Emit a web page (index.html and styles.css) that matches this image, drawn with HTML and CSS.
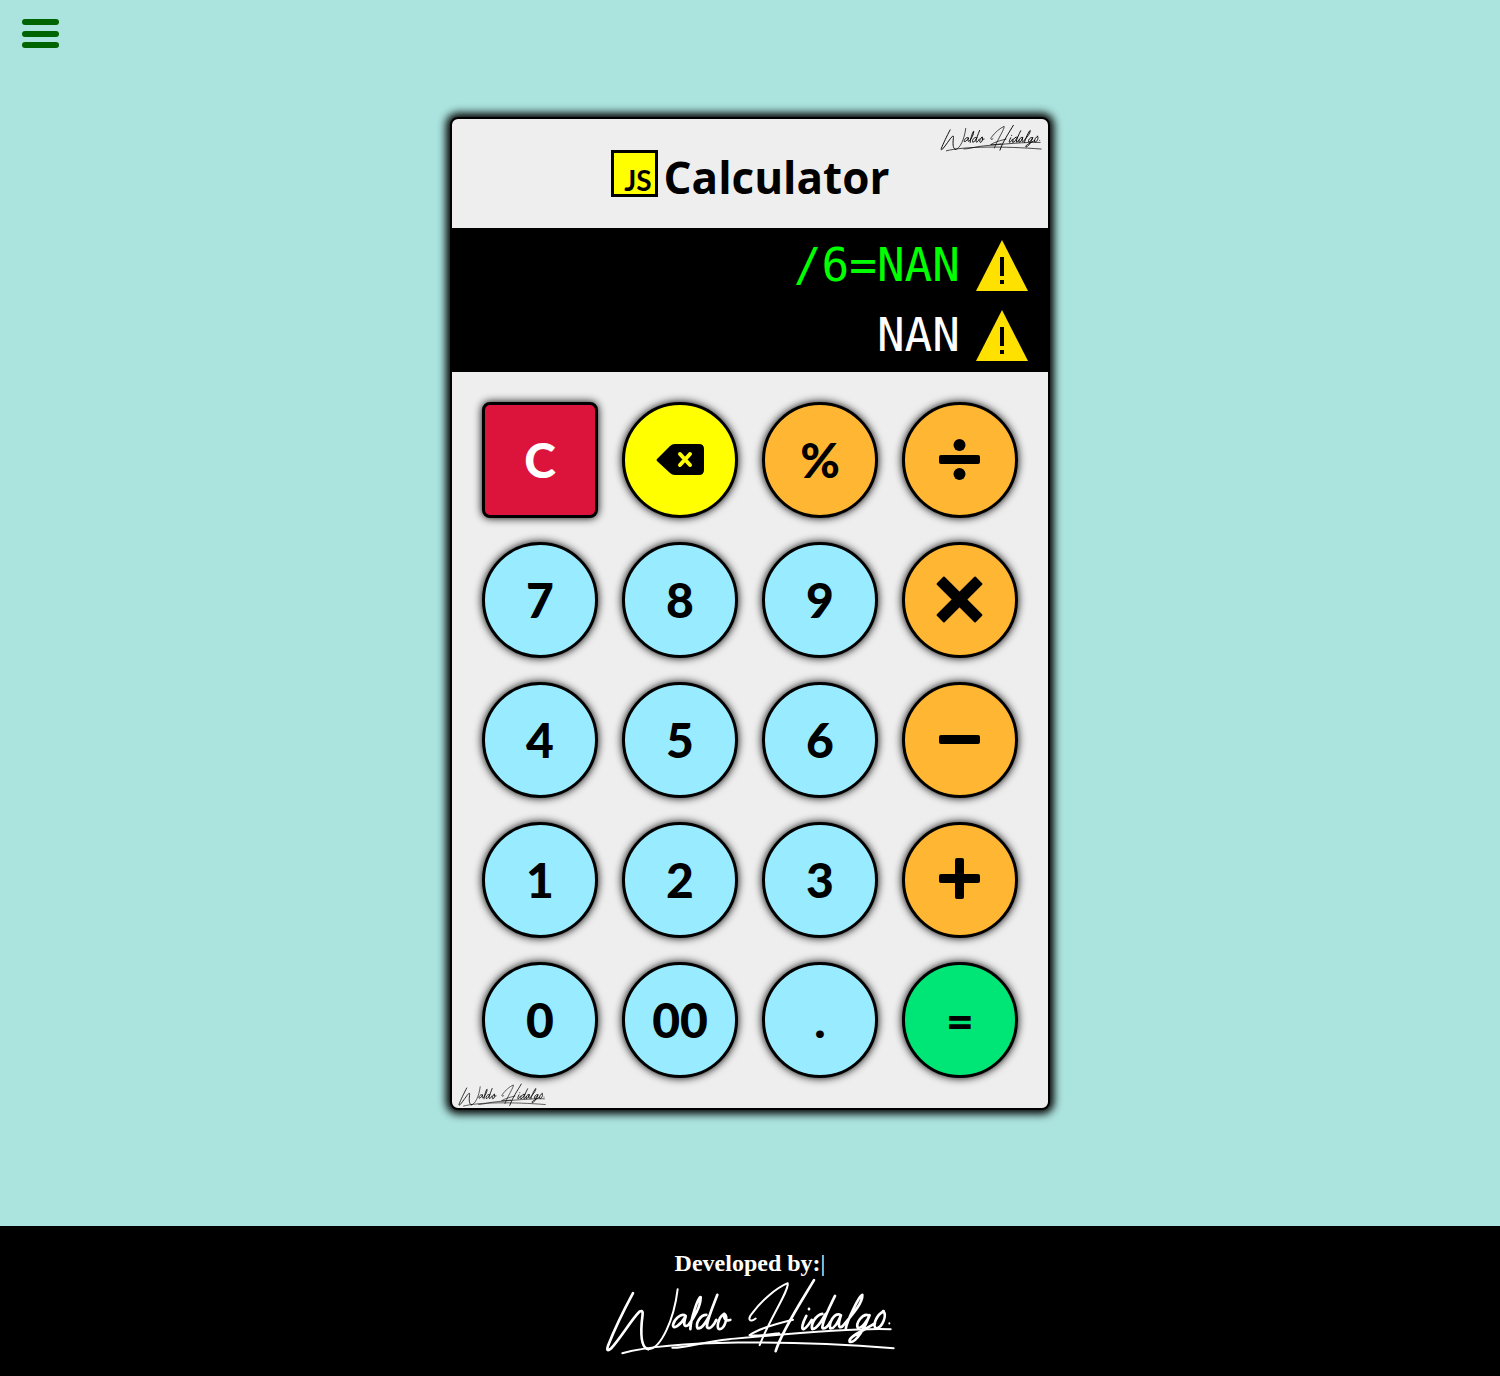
FILE: index.html
```html
<!DOCTYPE html>
<html lang="en">
<head>
<meta charset="utf-8">
<meta name="viewport" content="width=device-width, initial-scale=1">
<title>JS Calculator</title>
<link rel="stylesheet" href="styles.css">
</head>
<body>
<svg class="sprite" aria-hidden="true">
  <symbol id="signature" viewBox="45 112 876 236">
    <g fill="none" stroke="currentColor" stroke-linecap="round" stroke-linejoin="round">
      <path class="stroke-bold" d="M132 160C105 210 70 285 57 318C52 332 56 334 66 326C95 295 130 235 152 215C166 208 160 225 158 250C155 290 158 325 178 328"/>
      <path d="M178 328C215 328 255 240 266 148"/>
      <path class="stroke-bold" d="M290 228C275 218 255 240 252 255C252 272 275 255 290 230C284 250 282 264 298 256C315 235 335 200 335 172C328 168 305 240 304 268M352 225C335 225 318 250 326 266C340 268 352 245 362 226M385 165C372 200 352 245 354 262C362 272 375 255 382 240M405 222C388 232 380 268 392 268C408 266 418 230 406 222C402 235 412 246 424 240"/>
      <path d="M500 236C482 250 474 238 490 220C515 185 560 145 596 130C602 150 540 240 512 316M482 286C510 265 570 250 612 240"/>
      <path class="stroke-bold" d="M675 121C640 180 580 270 560 334"/>
      <path class="stroke-bold" d="M652 228C640 250 636 270 644 268C655 262 662 250 668 240M660 207V208M700 222C680 225 664 255 670 268C685 268 700 240 710 222M738 168C722 200 700 245 700 264C708 270 718 258 724 246M752 224C735 220 718 250 724 266C738 268 750 240 756 226C748 250 746 268 760 260C785 230 822 190 820 165C812 165 775 240 770 268"/>
      <path class="stroke-bold" d="M838 226C820 220 800 250 806 264C820 266 836 240 842 226C830 260 800 312 782 306C775 290 830 270 858 250M884 214C862 224 848 262 862 266C880 262 896 225 882 214"/>
      <path d="M901 250V251M905 268C800 262 560 285 420 298C340 306 290 325 250 324M482 286C500 290 540 284 570 280"/>
      <path d="M100 340C250 300 600 300 914 325"/>
    </g>
  </symbol>
  <symbol id="warning" viewBox="0 0 52 52">
    <path fill="#ffe100" d="M26 1L52 52H0Z"/>
    <path fill="#000" d="M24 18h4v19h-4zM24 41h4v4h-4z"/>
  </symbol>
</svg>

<button class="menu" type="button" aria-label="Menu">
  <svg viewBox="0 0 37 30" width="37" height="30" fill="currentColor"><rect y="0" width="37" height="6" rx="3"/><rect y="12" width="37" height="6" rx="3"/><rect y="23" width="37" height="6" rx="3"/></svg>
</button>

<main class="page">
  <section class="calculator" aria-label="Calculator">
    <header class="calculator-head">
      <span class="js-logo">JS</span>
      <h1 class="title">Calculator</h1>
      <svg class="signature signature-top" aria-hidden="true"><use href="#signature"/></svg>
    </header>
    <div class="display">
      <div class="line line-operation"><output>/6=NAN</output><svg class="warning" aria-hidden="true"><use href="#warning"/></svg></div>
      <div class="line"><output>NAN</output><svg class="warning" aria-hidden="true"><use href="#warning"/></svg></div>
    </div>
    <div class="keys">
      <button class="key key-clear" type="button">C</button>
      <button class="key key-delete" type="button" aria-label="Delete">
        <svg viewBox="0 0 48 48" width="48" height="48"><path d="M1 23L14 10Q16 8 19 8H43Q48 8 48 13V34Q48 39 43 39H19Q16 39 14 37L1 25Q0 24 1 23Z"/><path d="M24 18L34 29M34 18L24 29" stroke="#ff0" stroke-width="4" stroke-linecap="round"/></svg>
      </button>
      <button class="key key-operator" type="button">%</button>
      <button class="key key-operator" type="button" aria-label="Divide">
        <svg viewBox="0 0 48 48" width="48" height="48"><rect x="3" y="19" width="41" height="9" rx="2"/><circle cx="23.500" cy="9" r="6"/><circle cx="23.500" cy="38" r="6"/></svg>
      </button>
      <button class="key" type="button">7</button>
      <button class="key" type="button">8</button>
      <button class="key" type="button">9</button>
      <button class="key key-operator" type="button" aria-label="Multiply">
        <svg viewBox="0 0 48 48" width="48" height="48"><g transform="rotate(45 23.500 23.500)"><rect x="-4" y="18" width="55" height="11" rx="1"/><rect x="18" y="-4" width="11" height="55" rx="1"/></g></svg>
      </button>
      <button class="key" type="button">4</button>
      <button class="key" type="button">5</button>
      <button class="key" type="button">6</button>
      <button class="key key-operator" type="button" aria-label="Subtract">
        <svg viewBox="0 0 48 48" width="48" height="48"><rect x="3" y="19" width="41" height="9" rx="2"/></svg>
      </button>
      <button class="key" type="button">1</button>
      <button class="key" type="button">2</button>
      <button class="key" type="button">3</button>
      <button class="key key-operator" type="button" aria-label="Add">
        <svg viewBox="0 0 48 48" width="48" height="48"><rect x="3" y="18" width="41" height="9" rx="2"/><rect x="19" y="2" width="9" height="41" rx="2"/></svg>
      </button>
      <button class="key" type="button">0</button>
      <button class="key" type="button">00</button>
      <button class="key" type="button">.</button>
      <button class="key key-equals" type="button">=</button>
    </div>
    <svg class="signature signature-bottom" aria-hidden="true"><use href="#signature"/></svg>
  </section>
</main>

<footer class="footer">
  <p class="credit">Developed by:<span class="cursor">|</span></p>
  <svg class="signature-footer" role="img" aria-label="Waldo Hidalgo"><use href="#signature"/></svg>
</footer>
</body>
</html>
```
FILE: styles.css
```css
* {
  box-sizing: border-box;
}

body {
  margin: 0;
  min-height: 100vh;
  display: flex;
  flex-direction: column;
  background: #abe3de;
  color: #000;
  font-family: Lato, sans-serif;
}

.sprite {
  position: absolute;
  width: 0;
  height: 0;
}

#signature {
  --thin: 6px;
  stroke-width: 6px;
}

#signature .stroke-bold {
  stroke-width: 8px;
}

.menu {
  position: absolute;
  top: 19px;
  left: 22px;
  display: flex;
  padding: 0;
  border: 0;
  background: none;
  color: #006400;
  cursor: pointer;
}

.page {
  flex: 1;
  display: flex;
  align-items: center;
  justify-content: center;
  padding: 64px 16px;
}

.calculator {
  position: relative;
  width: 100%;
  max-width: 600px;
  border: 2px solid #000;
  border-radius: 8px;
  background: #eee;
  box-shadow: 0 0 8px 4px #000;
}

.calculator-head {
  display: flex;
  align-items: center;
  justify-content: center;
  gap: 6px;
  height: 109px;
}

.js-logo {
  display: flex;
  align-items: flex-end;
  justify-content: flex-end;
  width: 47px;
  height: 47px;
  padding-right: 3px;
  border: 3px solid #000;
  background: #ff0;
  font-size: 28px;
  font-weight: 700;
  line-height: 28px;
}

.title {
  margin: 0;
  padding-top: 8px;
  font-family: "Open Sans", sans-serif;
  font-size: 44px;
  font-weight: 700;
  line-height: 60px;
}

.signature {
  position: absolute;
  color: #000;
}

.signature-top {
  top: 5px;
  right: 6px;
  width: 102px;
  height: 28px;
}

.signature-bottom {
  bottom: 1px;
  left: 6px;
  width: 88px;
  height: 24px;
}

.display {
  display: flex;
  flex-direction: column;
  gap: 18px;
  padding: 11px 20px;
  background: #000;
  color: #fff;
}

.line {
  display: flex;
  align-items: center;
  justify-content: flex-end;
  gap: 16px;
  font-family: "DejaVu Sans Mono", monospace;
  font-size: 46px;
  line-height: 52px;
}

.line-operation {
  color: #0f0;
}

.warning {
  width: 52px;
  height: 52px;
}

.keys {
  display: grid;
  grid-template-columns: repeat(4, 1fr);
  gap: 24px;
  padding: 30px;
}

.key {
  display: flex;
  align-items: center;
  justify-content: center;
  aspect-ratio: 1;
  padding: 0;
  border: 3px solid #000;
  border-radius: 50%;
  background: #99ecff;
  box-shadow: 0 0 8px #000;
  color: #000;
  font-family: inherit;
  font-size: 48px;
  font-weight: 900;
  line-height: 56px;
  cursor: pointer;
}

.key-clear {
  border-radius: 8px;
  background: #dc143c;
  color: #fff;
}

.key-delete {
  background: #ff0;
}

.key-operator {
  background: #ffb733;
}

.key-equals {
  background: #00e676;
}

.footer {
  display: flex;
  flex-direction: column;
  align-items: center;
  padding: 24px 16px 20px;
  background: #000;
  color: #fff;
}

.credit {
  margin: 0;
  font-family: "Liberation Serif", serif;
  font-size: 24px;
  font-weight: 700;
  line-height: 27px;
}

.cursor {
  font-weight: 400;
}

.signature-footer {
  width: 292px;
  height: 79px;
}
```
